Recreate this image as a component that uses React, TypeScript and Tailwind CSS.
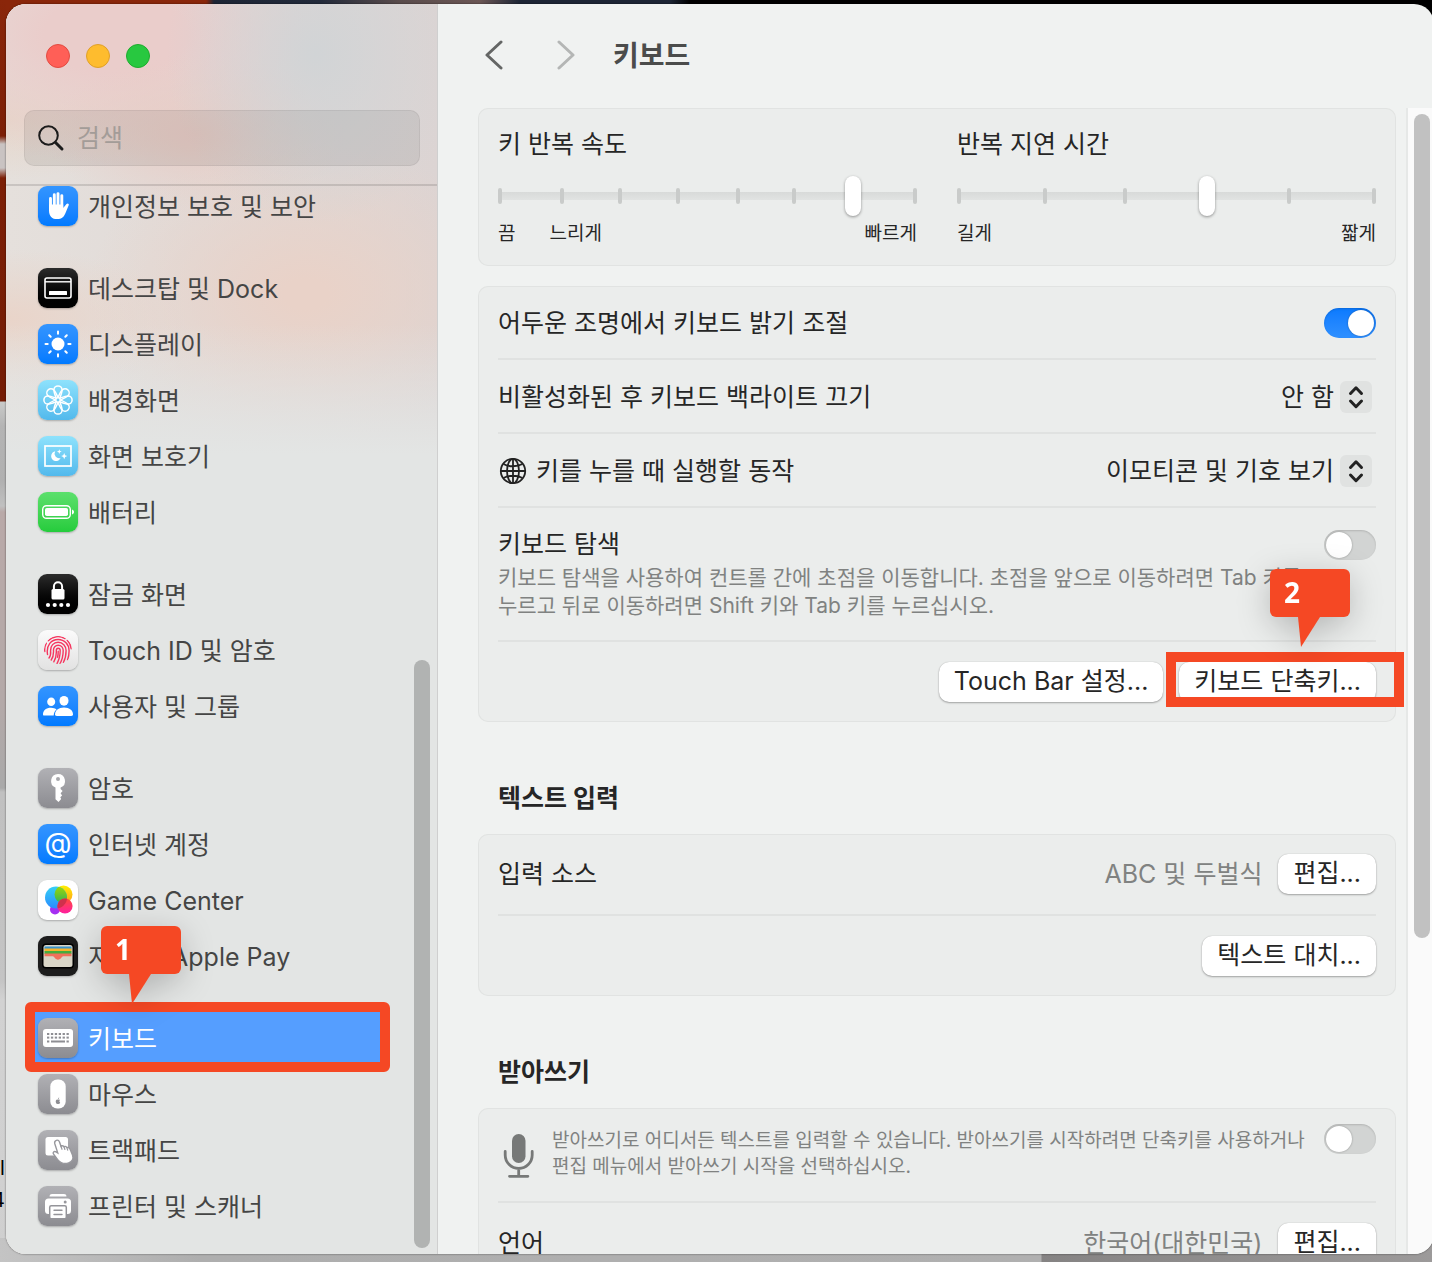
import React from "react";

const FONT = 'font-[Inter,"Noto_Sans_CJK_KR",sans-serif]';

/* ---------- sidebar icons (40 × 40 artboards) ---------- */

function Art({ children }: { children: React.ReactNode }) {
  return (
    <svg viewBox="0 0 40 40" className="size-10" fill="none" aria-hidden="true">
      {children}
    </svg>
  );
}

const HandIcon = () => (
  <Art>
    <g stroke="#fff" strokeWidth="2.900" strokeLinecap="round">
      <path d="M12.500 12.400V22M16.300 8.800V22M20 7.600V22M23.800 9.600V22" />
    </g>
    <path
      d="M11 18.500v5.900c0 5.600 3.200 8.700 8.200 8.700 4.400 0 6.900-2.400 8.300-6.200l3.200-7.600c.6-1.700-1.200-2.500-2.200-1.200L25.200 22v-3.500Z"
      fill="#fff"
    />
  </Art>
);

const DockIcon = () => (
  <Art>
    <rect x="7" y="10" width="26" height="20" rx="2" stroke="#fff" strokeWidth="1.600" />
    <path d="M7 13.800h26" stroke="#fff" strokeWidth="1.400" />
    <rect x="11" y="23" width="18" height="4" rx="0.500" fill="#fff" />
  </Art>
);

const DisplayIcon = () => (
  <Art>
    <circle cx="20" cy="20" r="6.500" fill="#fff" />
    <g stroke="#fff" strokeWidth="2" strokeLinecap="round">
      <path d="M20 7.500v2.200M20 30.300v2.200M7.500 20h2.200M30.300 20h2.200M11.200 11.200l1.500 1.500M27.300 27.300l1.500 1.500M28.800 11.200l-1.500 1.500M12.700 27.300l-1.500 1.500" />
    </g>
  </Art>
);

const FlowerIcon = () => (
  <Art>
    <g stroke="#fff" strokeWidth="1.500">
      {[0, 45, 90, 135, 180, 225, 270, 315].map((a) => (
        <g key={a} transform={`rotate(${a} 20 20)`}>
          <path d="M18.200 18.200C16.800 14.500 15.900 12.300 15.900 10a4.100 4.100 0 0 1 8.200 0c0 2.300-.9 4.500-2.300 8.200" />
        </g>
      ))}
      <circle cx="20" cy="20" r="2.200" />
    </g>
  </Art>
);

const SaverIcon = () => (
  <Art>
    <rect x="7" y="10" width="26" height="20" stroke="#fff" strokeWidth="1.700" />
    <path d="M17.200 15.300a4.900 4.900 0 1 0 5.400 6.700 4.600 4.600 0 0 1-5.400-6.700Z" fill="#fff" />
    <path d="m21.300 13.200.7 1.700 1.700.7-1.700.7-.7 1.700-.7-1.700-1.700-.7 1.700-.7.7-1.700ZM26.200 17l.9 2.200 2.200.9-2.200.9-.9 2.200-.9-2.200-2.200-.9 2.200-.9.9-2.200Z" fill="#fff" />
  </Art>
);

const BatteryIcon = () => (
  <Art>
    <rect x="4.700" y="13.700" width="27.600" height="12.600" rx="3.800" stroke="#fff" strokeWidth="1.400" />
    <rect x="7" y="16" width="23" height="8" rx="1.800" fill="#fff" />
    <path d="M34 17.500c1.300.4 2 1.300 2 2.500s-.7 2.100-2 2.500v-5Z" fill="#fff" />
  </Art>
);

const LockIcon = () => (
  <Art>
    <path d="M15.900 16v-3.600a4.100 4.100 0 0 1 8.200 0V16" stroke="#fff" strokeWidth="2" />
    <rect x="13.500" y="15" width="13" height="10.500" rx="1.500" fill="#fff" />
    {[10, 16.7, 23.3, 30].map((x) => (
      <circle key={x} cx={x} cy="31" r="2.100" fill="#fff" />
    ))}
  </Art>
);

const TouchIdIcon = () => (
  <Art>
    <defs>
      <clipPath id="tid-clip">
        <circle cx="20" cy="20" r="14" />
      </clipPath>
    </defs>
    <g clipPath="url(#tid-clip)" stroke="#f5365f" strokeWidth="1.400" strokeLinecap="round">
      <path d="M10.200 10.800a13.400 13.400 0 0 1 16.800-2.200M29.200 10.300a13.400 13.400 0 0 1 4 8.500" />
      <path d="M6.800 21.500c-.4-3 .2-5.700 1.500-8.300M9.500 24.500c-1.500-9.500 4-15 10.600-15 6.500 0 11 5 11 11.300 0 3.600-.5 6.400-1.600 9.200" />
      <path d="M11 28c1.600-2 1.900-4.400 1.600-7.500-.3-4.700 3.100-8.200 7.500-8.200 4.600 0 8 3.600 8 8.300 0 5-.9 8.600-2.700 11.900" />
      <path d="M13.200 30c2.200-3 2.500-5.700 2.300-9.500-.2-3 1.900-5.300 4.700-5.300s5 2.300 5 5.400c0 5.500-1.200 9.700-3.400 13.400" />
      <path d="M15.800 31.800c2.400-3.800 2.700-7.300 2.500-11.200 0-1.400.7-2.400 1.900-2.400 1.300 0 2 1 2 2.400 0 5.200-1 9-3.200 13" />
      <path d="M20.200 21.200c0 2-.1 4-.6 6" />
    </g>
  </Art>
);

const UsersIcon = () => (
  <Art>
    <ellipse cx="13.200" cy="15.800" rx="4" ry="4.300" fill="#fff" />
    <ellipse cx="26" cy="14.800" rx="4.500" ry="4.900" fill="#fff" />
    <path d="M5 28.500c0-4 3.200-6.700 8-6.700 2.400 0 4.300.7 5.600 1.800-1.700 1.300-2.800 3.100-2.900 5.800H6.200C5.400 29.800 5 29.400 5 28.500Z" fill="#fff" />
    <path d="M17 28.600c0-4 3.400-7 9-7s9 3 9 7c0 1-.7 1.400-1.800 1.400H18.800c-1.100 0-1.800-.4-1.800-1.400Z" fill="#fff" />
  </Art>
);

const KeyIcon = () => (
  <Art>
    <path
      fillRule="evenodd"
      d="M20 6a7 7 0 0 1 2.600 13.500V21l2 2-2 2.200 1.500 2.300-1.800 1.800.9 1.700-2.700 3-3-2.700V19.500A7 7 0 0 1 20 6Zm0 3a2 2 0 1 0 0 4 2 2 0 0 0 0-4Z"
      fill="#fff"
    />
  </Art>
);

const GameIcon = () => (
  <Art>
    <defs>
      <linearGradient id="gc-b" x1="0" y1="0" x2="0" y2="1">
        <stop stopColor="#35d0f5" />
        <stop offset="1" stopColor="#2a8cff" />
      </linearGradient>
      <linearGradient id="gc-y" x1="0" y1="0" x2="0" y2="1">
        <stop stopColor="#fff000" />
        <stop offset="1" stopColor="#ff9a1f" />
      </linearGradient>
      <linearGradient id="gc-g" x1="0" y1="0" x2="0" y2="1">
        <stop stopColor="#a5d800" />
        <stop offset="1" stopColor="#2db35a" />
      </linearGradient>
      <linearGradient id="gc-r" x1="0" y1="0" x2="0" y2="1">
        <stop stopColor="#ff4a3a" />
        <stop offset="1" stopColor="#ff1ea0" />
      </linearGradient>
      <clipPath id="gc-clip">
        <circle cx="18" cy="17.500" r="11" />
      </clipPath>
    </defs>
    <circle cx="17" cy="29.500" r="5" fill="#a52ff2" />
    <circle cx="25.500" cy="14.500" r="9" fill="url(#gc-y)" />
    <circle cx="18" cy="17.500" r="11" fill="url(#gc-b)" />
    <circle cx="25.500" cy="14.500" r="9" fill="url(#gc-g)" clipPath="url(#gc-clip)" />
    <circle cx="27" cy="26" r="7.600" fill="url(#gc-r)" />
    <circle cx="27" cy="26" r="7.600" fill="#d0304c" clipPath="url(#gc-clip)" />
  </Art>
);

const WalletIcon = () => (
  <Art>
    <rect x="4" y="7.500" width="32" height="25" rx="4" fill="#000" />
    <rect x="5.500" y="9" width="29" height="22" rx="2.500" fill="#dad6c8" />
    <path d="M6.500 10.500h27v3h-27z" fill="#3a93c9" />
    <path d="M6.500 12.500h27v3h-27z" fill="#f7b32b" />
    <path d="M6.500 15h27v3h-27z" fill="#45ad3c" />
    <path d="M6.500 17.500h27v2.800h-7.500c-1.200 0-1.900.5-2.500 1.300-1.700 2.700-5.300 2.700-7 0-.6-.8-1.300-1.300-2.500-1.300H6.500v-2.800Z" fill="#f2705b" />
  </Art>
);

const KeyboardIcon = () => (
  <Art>
    <rect x="5" y="11" width="30" height="18" rx="3" fill="#fff" />
    <g fill="#8e8e93">
      {[0, 1, 2, 3, 4, 5].map((i) => (
        <React.Fragment key={i}>
          <rect x={9 + i * 3.9} y="15" width="2.300" height="2" />
          <rect x={9 + i * 3.9} y="18.600" width="2.300" height="2" />
        </React.Fragment>
      ))}
      <rect x="9" y="22.500" width="2.300" height="2" />
      <rect x="13" y="22.500" width="14" height="2" />
      <rect x="28.500" y="22.500" width="2.300" height="2" />
    </g>
  </Art>
);

const MouseIcon = () => (
  <Art>
    <rect x="12.300" y="5.500" width="15.400" height="29" rx="7" fill="#fff" />
    <path d="M20 25.700c.8-.5 1.700-.3 2.100.3-1 .7-.9 2 .1 2.500-.6 1.300-1.200 1.800-2.200 1.300-1 .5-1.600 0-2.100-1.300-.6-1.800.5-3.500 2.100-2.800Zm0-.5c0-.9.500-1.500 1.200-1.600 0 .9-.5 1.500-1.200 1.600Z" fill="#8e8e93" />
  </Art>
);

const TrackpadIcon = () => (
  <Art>
    <rect x="7.500" y="7" width="22.500" height="18.500" rx="2.500" fill="#fff" />
    <path
      d="M18.300 10.300c1.600-.5 2.700.4 3.200 1.800l1.500 4.200c1-.7 2.200-.5 2.900.4 1-.5 2.300-.2 2.900.8 1.300-.3 2.700.4 3.400 2l2.300 5.500c1.500 4-.7 6.800-4 8-4.600 1.500-8.300-.4-11-3.600l-3.900-5.200c-1.400-1.800.6-3.400 2.400-2.400l1.700 1.100-2.900-9.200c-.4-1.500.1-2.900 1.500-3.400Z"
      fill="#fff"
      stroke="#98989d"
      strokeWidth="1.400"
    />
    <path d="m23 16.300 1 3M26 16.800l.9 2.700M28.900 17.600l.8 2.500" stroke="#98989d" strokeWidth="1.200" strokeLinecap="round" />
  </Art>
);

const PrinterIcon = () => (
  <Art>
    <path d="M11.500 10.500C11.500 8.800 12.700 8 14 8h12c1.300 0 2.500.8 2.500 2.500h-17Z" fill="#fff" />
    <rect x="7" y="12.500" width="26" height="15.500" rx="3.500" fill="#fff" />
    <circle cx="27.200" cy="16" r="1.500" fill="#98989d" />
    <rect x="11.700" y="19.700" width="16.600" height="13" rx="1.500" fill="#fff" stroke="#949499" strokeWidth="1.500" />
    <path d="M16 24.200h8M16 28.500h8" stroke="#949499" strokeWidth="1.400" strokeLinecap="round" />
  </Art>
);

/* ---------- sidebar data ---------- */

const BLUE = "bg-linear-to-b from-[#3395ff] to-[#007aff]";
const BLACK = "bg-linear-to-b from-[#2c2c2c] to-black";
const SKY = "bg-linear-to-b from-[#8ee2fc] to-[#52b9ec]";
const GRAY = "bg-linear-to-b from-[#b1b1b5] to-[#8c8c91]";

type Item = { label: string; tile: string; icon: React.ReactNode; selected?: boolean };

const groups: Item[][] = [
  [{ label: "개인정보 보호 및 보안", tile: BLUE, icon: <HandIcon /> }],
  [
    { label: "데스크탑 및 Dock", tile: BLACK, icon: <DockIcon /> },
    { label: "디스플레이", tile: BLUE, icon: <DisplayIcon /> },
    { label: "배경화면", tile: SKY, icon: <FlowerIcon /> },
    { label: "화면 보호기", tile: SKY, icon: <SaverIcon /> },
    { label: "배터리", tile: "bg-linear-to-b from-[#5be06c] to-[#24cc3c]", icon: <BatteryIcon /> },
  ],
  [
    { label: "잠금 화면", tile: BLACK, icon: <LockIcon /> },
    { label: "Touch ID 및 암호", tile: "bg-linear-to-b from-[#fbfbfb] to-[#e2e2e2]", icon: <TouchIdIcon /> },
    { label: "사용자 및 그룹", tile: BLUE, icon: <UsersIcon /> },
  ],
  [
    { label: "암호", tile: GRAY, icon: <KeyIcon /> },
    {
      label: "인터넷 계정",
      tile: BLUE,
      icon: (
        <span className="pb-0.5 text-[28px] leading-8 text-white" aria-hidden="true">
          @
        </span>
      ),
    },
    { label: "Game Center", tile: "bg-white", icon: <GameIcon /> },
    { label: "지갑 및 Apple Pay", tile: "bg-[#1d1d1d]", icon: <WalletIcon /> },
  ],
  [
    { label: "키보드", tile: GRAY, icon: <KeyboardIcon />, selected: true },
    { label: "마우스", tile: GRAY, icon: <MouseIcon /> },
    { label: "트랙패드", tile: GRAY, icon: <TrackpadIcon /> },
    { label: "프린터 및 스캐너", tile: GRAY, icon: <PrinterIcon /> },
  ],
];

/* ---------- shared pieces ---------- */

function Callout({ n, className }: { n: number; className: string }) {
  return (
    <div className={`pointer-events-none absolute z-20 w-20 drop-shadow-[0_8px_16px_rgba(0,0,0,0.22)] ${className}`}>
      <div className='h-12 rounded-md bg-[#f54824] pl-[14px] font-["Open_Sans",sans-serif] text-[28px] leading-[46px] font-bold text-white'>
        {n}
      </div>
      <svg viewBox="0 0 22 30" className="ml-7 block h-[30px] w-[22px]" aria-hidden="true">
        <path d="M0 0h22L3 30Z" fill="#f54824" />
      </svg>
    </div>
  );
}

function Switch({ label, on = false }: { label: string; on?: boolean }) {
  return (
    <input
      type="checkbox"
      role="switch"
      aria-label={label}
      defaultChecked={on}
      className="h-[30px] w-[52px] shrink-0 appearance-none rounded-full bg-[#d2d4d3] p-0.5 shadow-[inset_0_1px_2px_rgba(0,0,0,0.15)] before:block before:size-[26px] before:rounded-full before:bg-white before:shadow-[0_0_2px_rgba(0,0,0,0.35)] checked:bg-linear-to-b checked:from-[#0a7aff] checked:to-[#2f90ff] checked:before:translate-x-[22px]"
    />
  );
}

function PushButton({ children }: { children: React.ReactNode }) {
  return (
    <button className="h-10 shrink-0 rounded-[10px] bg-white px-[15px] pb-0.5 text-[25px] leading-8 whitespace-nowrap text-[#262626] shadow-[0_1px_2px_rgba(0,0,0,0.3),0_0_1px_rgba(0,0,0,0.25)]">
      {children}
    </button>
  );
}

function Popup({ label, value }: { label: string; value: string }) {
  return (
    <div className="relative mr-1 ml-auto flex items-center">
      <select aria-label={label} className="h-8 appearance-none bg-transparent pr-[38px] text-right text-[25px] leading-8">
        <option>{value}</option>
      </select>
      <span className="pointer-events-none absolute right-0 flex size-8 items-center justify-center rounded-md bg-[#e0e2e1]">
        <svg viewBox="0 0 32 32" className="size-8" fill="none" stroke="#222" strokeWidth="3" strokeLinecap="round" strokeLinejoin="round" aria-hidden="true">
          <path d="m10.500 12.500 5.500-5.700 5.500 5.700M10.500 20l5.500 5.700 5.500-5.700" />
        </svg>
      </span>
    </div>
  );
}

function Slider({ id, label, value, ticks, children }: { id: string; label: string; value: number; ticks: number[]; children: React.ReactNode }) {
  return (
    <div className="flex-1">
      <label htmlFor={id} className="block text-[25px] leading-7">
        {label}
      </label>
      <div className="relative mt-[18px] flex h-10 items-center">
        <div className="h-2 w-full bg-linear-to-b from-[#d8dad9] to-[#e1e3e2]" />
        {ticks.map((t) => (
          <span key={t} className="absolute h-4 w-1 -translate-x-1/2 rounded-sm bg-[#c9cbca]" style={{ left: `${t}%` }} />
        ))}
        <input
          id={id}
          type="range"
          defaultValue={value}
          className="absolute inset-0 h-10 w-full appearance-none bg-transparent [&::-webkit-slider-thumb]:h-10 [&::-webkit-slider-thumb]:w-4 [&::-webkit-slider-thumb]:appearance-none [&::-webkit-slider-thumb]:rounded-full [&::-webkit-slider-thumb]:bg-white [&::-webkit-slider-thumb]:shadow-[0_1px_3px_rgba(0,0,0,0.4)]"
        />
      </div>
      <div className="mt-1.5 flex text-[19px] leading-6">{children}</div>
    </div>
  );
}

const card = "rounded-[10px] bg-[#ebedec] px-5 shadow-[inset_0_0_0_1px_#e1e3e2]";
const row = "flex h-[74px] items-center border-b-2 border-[#e0e2e1] pt-0.5";
const label = "text-[25px] leading-8";

function Heading({ children }: { children: React.ReactNode }) {
  return <h2 className="px-5 pt-[62px] pb-[22px] text-[25px] leading-7 font-bold">{children}</h2>;
}

/* ---------- sidebar ---------- */

function Sidebar() {
  return (
    <aside className="flex w-[432px] shrink-0 flex-col border-r border-[#cfcfcf] bg-[#e3e5e4] bg-[linear-gradient(to_bottom,transparent_320px,#e3e5e4_450px),radial-gradient(150px_170px_at_310px_50px,#d1d4d6,transparent),radial-gradient(220px_150px_at_300px_290px,#e9d2c8_10%,transparent),radial-gradient(180px_70px_at_0px_315px,#e9d4c9,transparent),radial-gradient(150px_80px_at_190px_130px,#e8ccc5,transparent),radial-gradient(240px_130px_at_110px_30px,#eacdcb_30%,transparent),radial-gradient(180px_60px_at_0px_115px,#e6d6ca,transparent),linear-gradient(to_right,#e5e0dc,#dcd4d3)] text-[#454545]">
      <div className="flex gap-4 px-10 pt-10">
        <button aria-label="닫기" className="size-6 rounded-full border border-[#e24b41] bg-[#ff5f57]" />
        <button aria-label="최소화" className="size-6 rounded-full border border-[#e0a029] bg-[#febc2e]" />
        <button aria-label="확대" className="size-6 rounded-full border border-[#1eac2e] bg-[#28c840]" />
      </div>
      <div className="border-b-2 border-black/12 px-[18px] pt-[42px] pb-[18px]">
        <label className="-mr-px flex h-14 items-center gap-3 rounded-[10px] border border-black/6 bg-black/7 px-3">
          <svg viewBox="0 0 28 28" className="size-7" fill="none" stroke="#1c1c1c" strokeLinecap="round" aria-hidden="true">
            <circle cx="11.500" cy="11.500" r="9.300" strokeWidth="2" />
            <path d="m18.500 18.500 6.500 6.500" strokeWidth="3" />
          </svg>
          <input aria-label="검색" placeholder="검색" className="min-w-0 flex-1 bg-transparent pt-0.5 text-[25px] outline-none placeholder:text-[#a39c98]" />
        </label>
      </div>
      <div className="flex min-h-0 flex-1">
        <nav className="min-w-0 flex-1">
          <div className="-mt-2 flex flex-col gap-[26px]">
            {groups.map((g, i) => (
              <ul key={i}>
                {g.map((it) => (
                  <li key={it.label} className="relative flex h-14 items-center pl-8">
                    {it.selected && (
                      <>
                        <span className="absolute top-[-8px] left-[19px] h-[70px] w-[365px] rounded-md border-10 border-[#f54824] bg-[#559eff]" />
                        <Callout n={1} className="top-[-84px] left-[95px]" />
                      </>
                    )}
                    <a href="#" className={it.selected ? "relative flex items-center gap-[10px] text-white" : "flex items-center gap-[10px]"}>
                      <span className={`flex size-10 items-center justify-center rounded-[9px] shadow-[0_1px_2px_rgba(0,0,0,0.25)] ${it.tile}`}>{it.icon}</span>
                      <span className="pt-0.5 text-[25px] leading-8 whitespace-nowrap">{it.label}</span>
                    </a>
                  </li>
                ))}
              </ul>
            ))}
          </div>
        </nav>
        <div className="mr-[7px] mb-[6px] flex w-4 flex-col" aria-hidden="true">
          <div className="flex-[474]" />
          <div className="flex-[588] rounded-full bg-[#b1b3b2]" />
        </div>
      </div>
    </aside>
  );
}

/* ---------- page ---------- */

export default function App() {
  return (
    <div
      className={`relative flex h-screen overflow-hidden bg-[linear-gradient(to_right,#8a260a_206px,#1d2535_214px,#222a3a_320px,#5a4c4c_400px,#6b5755_480px,#1d2535_520px,#1d2535_670px,#000_690px)] pt-1 pb-2 pl-1.5 text-[#262626] ${FONT}`}
    >
      <div className="absolute inset-y-0 left-0 w-1.5 bg-[linear-gradient(to_bottom,#8a260a,#7c1f06_136px,#c9c3c2_144px,#c9c3c2_168px,#7c1f06_178px,#741c05_401px,#c9cac9_402px,#b4b4b4_426px,#b0b0b0_480px,#c0c0c0_506px,#b9a9a8_512px,#b4a9a8_700px,#a9a9a9_788px,#c0c0c0_792px,#c4c4c4_980px,#d2d2d2_1000px,#cfcfcf)]" />
      <div className="absolute inset-x-0 bottom-0 h-6 bg-[linear-gradient(to_right,#c4c4c4,#aeaeae_200px,#b0b0b0_1041px,#858383_1042px,#9c9a9a)]" />
      <div className="absolute top-[1152px] left-0 w-1.5 overflow-hidden text-xl leading-8 text-black" aria-hidden="true">
        <span className="block">l</span>
        <span className="-ml-2 block">4</span>
      </div>
      <div className="relative -mr-0.5 flex min-w-0 flex-1 overflow-hidden rounded-[20px] bg-[#f0f2f1] shadow-[0_0_2px_rgba(0,0,0,0.6)]">
        <Sidebar />
        <main className="flex min-w-0 flex-1 flex-col">
          <header className="flex h-[104px] shrink-0 items-center pb-0.5 pl-[46px]">
            <button aria-label="뒤로">
              <svg viewBox="0 0 20 30" className="h-[30px] w-5" fill="none" stroke="#646665" strokeWidth="3" strokeLinecap="round" strokeLinejoin="round" aria-hidden="true">
                <path d="M17 2 3 15l14 13" />
              </svg>
            </button>
            <button aria-label="앞으로" className="ml-[52px]">
              <svg viewBox="0 0 20 30" className="h-[30px] w-5" fill="none" stroke="#b4b6b5" strokeWidth="3" strokeLinecap="round" strokeLinejoin="round" aria-hidden="true">
                <path d="m3 2 14 13L3 28" />
              </svg>
            </button>
            <h1 className="ml-[37px] pt-0.5 text-[28px] leading-9 font-bold text-[#4b4c4b]">키보드</h1>
          </header>

          <div className="flex min-h-0 flex-1">
            <div className="min-w-0 flex-1 pr-[10px] pl-10">
              <section className={`flex gap-10 pt-[22px] pb-5 ${card}`}>
                <Slider id="key-repeat" label="키 반복 속도" value={86} ticks={[0.5, 15.3, 29.2, 43, 57.3, 70.7, 99.5]}>
                  <span>끔</span>
                  <span className="ml-[34px]">느리게</span>
                  <span className="ml-auto">빠르게</span>
                </Slider>
                <Slider id="repeat-delay" label="반복 지연 시간" value={60} ticks={[0.5, 21, 40, 79.2, 99.5]}>
                  <span>길게</span>
                  <span className="ml-auto">짧게</span>
                </Slider>
              </section>

              <section className={`mt-5 ${card}`}>
                <div className={row}>
                  <span className={`flex-1 ${label}`}>어두운 조명에서 키보드 밝기 조절</span>
                  <Switch label="어두운 조명에서 키보드 밝기 조절" on />
                </div>
                <div className={row}>
                  <span className={label}>비활성화된 후 키보드 백라이트 끄기</span>
                  <Popup label="비활성화된 후 키보드 백라이트 끄기" value="안 함" />
                </div>
                <div className={row}>
                  <svg viewBox="0 0 30 30" className="mr-2 size-[30px]" fill="none" stroke="#222" strokeWidth="1.800" aria-hidden="true">
                    <circle cx="15" cy="15" r="12.200" />
                    <ellipse cx="15" cy="15" rx="6" ry="12.200" />
                    <path d="M15 2.800v24.400M2.800 15h24.400M5.500 8c5.500 3 13.500 3 19 0M5.500 22c5.500-3 13.500-3 19 0" />
                  </svg>
                  <span className={label}>키를 누를 때 실행할 동작</span>
                  <Popup label="키를 누를 때 실행할 동작" value="이모티콘 및 기호 보기" />
                </div>
                <div className="flex items-start border-b-2 border-[#e0e2e1] pt-[22px] pb-5">
                  <div className="min-w-0 flex-1">
                    <div className="text-[25px] leading-7">키보드 탐색</div>
                    <p className="mt-1.5 text-[21px] leading-7 whitespace-nowrap text-[#808281]">
                      키보드 탐색을 사용하여 컨트롤 간에 초점을 이동합니다. 초점을 앞으로 이동하려면 Tab 키를
                      <br />
                      누르고 뒤로 이동하려면 Shift 키와 Tab 키를 누르십시오.
                    </p>
                  </div>
                  <Switch label="키보드 탐색" />
                </div>
                <div className="flex h-20 items-center justify-end gap-4">
                  <PushButton>Touch Bar 설정...</PushButton>
                  <div className="relative flex">
                    <PushButton>키보드 단축키...</PushButton>
                    <span className="pointer-events-none absolute -top-[10px] -right-7 -bottom-[5px] -left-[13px] border-10 border-[#f54824]" />
                    <Callout n={2} className="-top-[93px] right-[26px]" />
                  </div>
                </div>
              </section>

              <Heading>텍스트 입력</Heading>
              <section className={card}>
                <div className="flex h-[82px] items-center gap-4 border-b-2 border-[#e0e2e1]">
                  <span className={`flex-1 ${label}`}>입력 소스</span>
                  <span className={`text-[#808281] ${label}`}>ABC 및 두벌식</span>
                  <PushButton>편집...</PushButton>
                </div>
                <div className="flex h-20 items-center justify-end">
                  <PushButton>텍스트 대치...</PushButton>
                </div>
              </section>

              <Heading>받아쓰기</Heading>
              <section className={card}>
                <div className="flex h-[95px] items-start border-b-2 border-[#e0e2e1] pt-4">
                  <svg viewBox="0 0 40 48" className="mt-2 h-12 w-10 shrink-0" fill="none" stroke="#777978" strokeWidth="2.800" strokeLinecap="round" aria-hidden="true">
                    <rect x="14" y="2" width="13.500" height="29" rx="6.700" fill="#777978" stroke="none" />
                    <path d="M7.200 19.500v3.500a13.500 13.500 0 0 0 27 0v-3.500M20.700 37v7M11.500 44.300h18.400" />
                  </svg>
                  <p className="mt-1 ml-[14px] min-w-0 flex-1 text-[19px] leading-[26px] whitespace-nowrap text-[#808281]">
                    받아쓰기로 어디서든 텍스트를 입력할 수 있습니다. 받아쓰기를 시작하려면 단축키를 사용하거나
                    <br />
                    편집 메뉴에서 받아쓰기 시작을 선택하십시오.
                  </p>
                  <Switch label="받아쓰기" />
                </div>
                <div className="flex h-20 items-center gap-4">
                  <span className={`flex-1 ${label}`}>언어</span>
                  <span className={`text-[#808281] ${label}`}>한국어(대한민국)</span>
                  <PushButton>편집...</PushButton>
                </div>
              </section>
            </div>

            <div className="flex w-7 shrink-0 flex-col border-l-2 border-[#e6e8e7] bg-[#fafafa] px-1.5 pt-1.5" aria-hidden="true">
              <div className="w-4 flex-[824] rounded-full bg-[#c1c1c1]" />
              <div className="flex-[316]" />
            </div>
          </div>
        </main>
      </div>
    </div>
  );
}
